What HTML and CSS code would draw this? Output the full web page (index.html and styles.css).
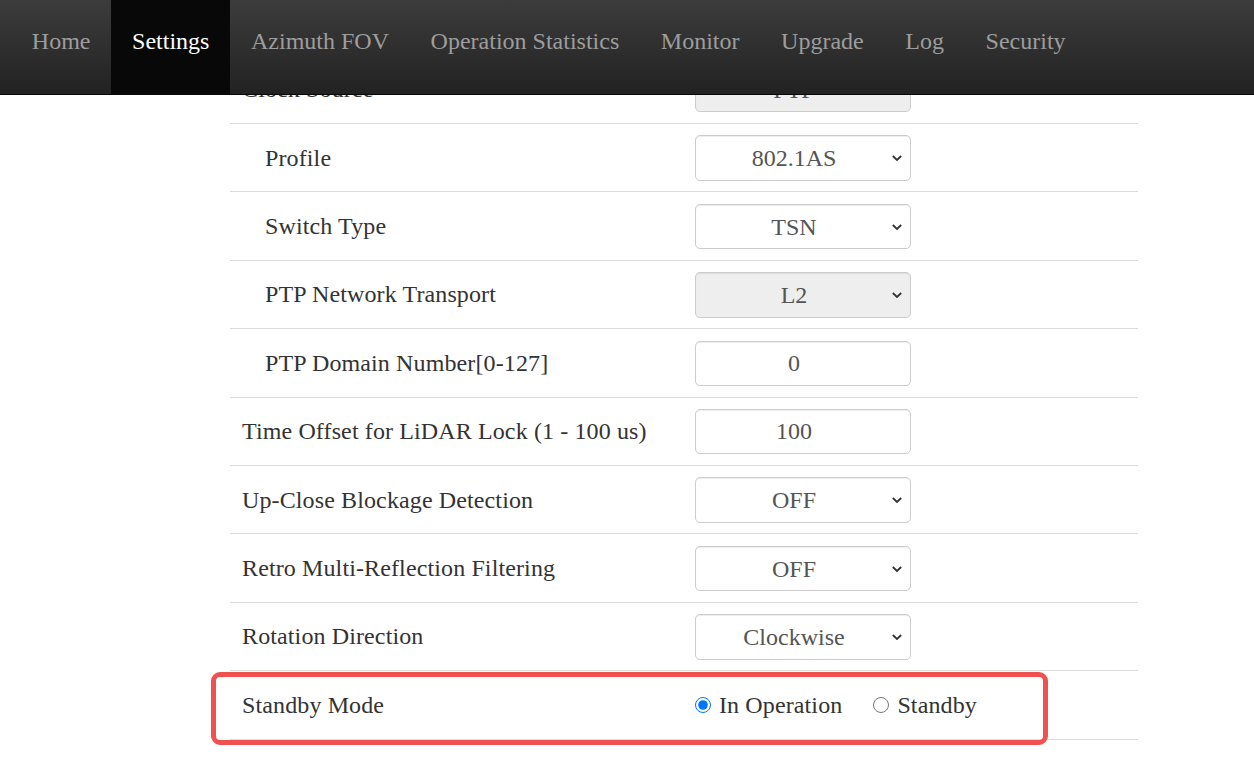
FILE: index.html
```html
<!DOCTYPE html>
<html lang="en">
<head>
<meta charset="utf-8">
<title>Settings</title>
<link rel="stylesheet" href="styles.css">
</head>
<body>
<nav class="navbar">
  <ul class="nav-list">
    <li><a class="nav-link" href="#">Home</a></li>
    <li><a class="nav-link active" href="#">Settings</a></li>
    <li><a class="nav-link" href="#">Azimuth FOV</a></li>
    <li><a class="nav-link" href="#">Operation Statistics</a></li>
    <li><a class="nav-link" href="#">Monitor</a></li>
    <li><a class="nav-link" href="#">Upgrade</a></li>
    <li><a class="nav-link" href="#">Log</a></li>
    <li><a class="nav-link" href="#">Security</a></li>
  </ul>
</nav>

<main class="content">
  <div class="settings">
    <div class="row">
      <div class="label">Clock Source</div>
      <div class="value"><select class="control" disabled><option>PTP</option></select></div>
    </div>
    <div class="row">
      <div class="label sub">Profile</div>
      <div class="value"><select class="control"><option>802.1AS</option></select></div>
    </div>
    <div class="row">
      <div class="label sub">Switch Type</div>
      <div class="value"><select class="control"><option>TSN</option></select></div>
    </div>
    <div class="row">
      <div class="label sub">PTP Network Transport</div>
      <div class="value"><select class="control" disabled><option>L2</option></select></div>
    </div>
    <div class="row">
      <div class="label sub">PTP Domain Number[0-127]</div>
      <div class="value"><input class="control text" type="text" value="0"></div>
    </div>
    <div class="row">
      <div class="label">Time Offset for LiDAR Lock (1 - 100 us)</div>
      <div class="value"><input class="control text" type="text" value="100"></div>
    </div>
    <div class="row">
      <div class="label">Up-Close Blockage Detection</div>
      <div class="value"><select class="control"><option>OFF</option></select></div>
    </div>
    <div class="row">
      <div class="label">Retro Multi-Reflection Filtering</div>
      <div class="value"><select class="control"><option>OFF</option></select></div>
    </div>
    <div class="row">
      <div class="label">Rotation Direction</div>
      <div class="value"><select class="control"><option>Clockwise</option></select></div>
    </div>
    <div class="row">
      <div class="label">Standby Mode</div>
      <div class="value radios">
        <label class="radio"><input type="radio" name="standby" checked>In Operation</label>
        <label class="radio"><input type="radio" name="standby">Standby</label>
      </div>
    </div>
  </div>
  <div class="highlight"></div>
</main>
</body>
</html>
```

FILE: styles.css
```css
html, body {
  margin: 0;
  padding: 0;
  background: #fff;
}

body {
  font-family: "Liberation Serif", "Times New Roman", serif;
  font-size: 24px;
  color: #333;
  min-height: 768px;
}

.navbar {
  position: fixed;
  top: 0;
  left: 0;
  right: 0;
  height: 94px;
  background: linear-gradient(to bottom, #3c3c3c 0%, #222 100%);
  border-bottom: 1px solid #080808;
  z-index: 10;
}

.nav-list {
  list-style: none;
  margin: 0;
  padding: 0 0 0 11px;
  display: flex;
}

.nav-link {
  display: block;
  padding: 26px 20.8px 38px;
  line-height: 30px;
  color: #9d9d9d;
  text-decoration: none;
}

.nav-link.active {
  color: #fff;
  background: #080808;
}

.content {
  position: relative;
  margin-left: 230px;
  width: 908px;
  padding-top: 55.6px;
  padding-bottom: 40px;
}

.settings {
  display: flex;
  flex-direction: column;
}

.row {
  display: grid;
  grid-template-columns: 453px 1fr;
  align-items: center;
  height: 68.4px;
  box-sizing: border-box;
  border-bottom: 1px solid #ddd;
  padding-top: 1px;
}

.label {
  padding: 0 12px;
  letter-spacing: 0.12px;
  white-space: nowrap;
}

.label.sub {
  padding-left: 35px;
}

.value {
  padding: 0 12px;
}

.control {
  box-sizing: border-box;
  display: block;
  width: 216px;
  height: 45.4px;
  margin: 0;
  padding: 0 30px 0 12px;
  font-family: "Liberation Serif", "Times New Roman", serif;
  font-size: 24px;
  color: #555;
  background-color: #fff;
  border: 1px solid #ccc;
  border-radius: 5px;
  text-align: center;
  text-align-last: center;
  box-shadow: inset 0 1px 1px rgba(0,0,0,0.075);
  -webkit-appearance: none;
  appearance: none;
  outline: none;
}

select.control {
  background-image: url("data:image/svg+xml;utf8,<svg xmlns='http://www.w3.org/2000/svg' width='12' height='8' viewBox='0 0 12 8'><path d='M1.8 2 L6 6 L10.2 2' fill='none' stroke='%23333' stroke-width='1.8'/></svg>");
  background-repeat: no-repeat;
  background-position: right 7px center;
  background-size: 12px 8px;
}

.control:disabled {
  background-color: #eee;
  opacity: 1;
  color: #555;
}

.radios {
  display: flex;
  align-items: center;
}

.radio {
  display: flex;
  align-items: center;
  margin-right: 31px;
  color: #333;
  letter-spacing: 0.12px;
}

.radio input {
  width: 16px;
  height: 16px;
  margin: 0 8px 0 0;
  accent-color: #0075ff;
}

.highlight {
  position: absolute;
  left: -19px;
  top: 672px;
  width: 837px;
  height: 73px;
  box-sizing: border-box;
  border: 5px solid #ef5050;
  border-radius: 9px;
  pointer-events: none;
}
```
